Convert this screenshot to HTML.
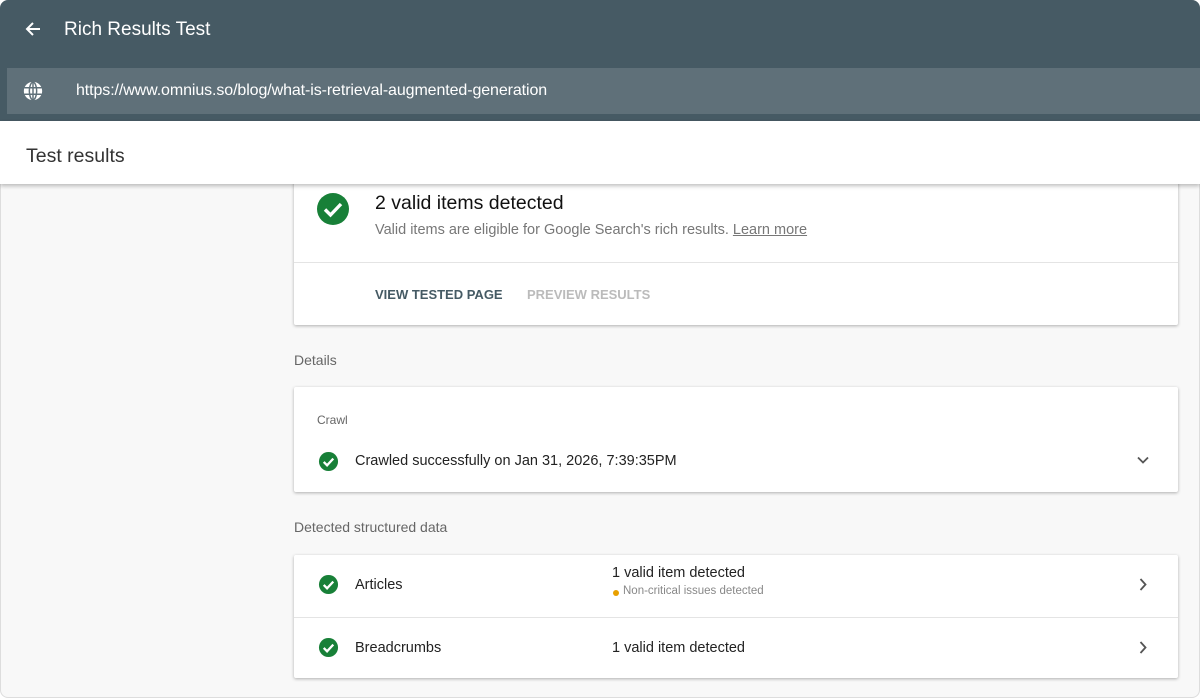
<!DOCTYPE html>
<html><head><style>
*{box-sizing:border-box;margin:0;padding:0}
body{width:1200px;height:698px;overflow:hidden;background:#fff;font-family:"Liberation Sans",Arial,sans-serif;position:relative}
.frame{position:absolute;left:0;top:0;width:1200px;height:698px;border-radius:8px;overflow:hidden;background:#f8f8f8;box-shadow:inset 0 0 0 1px #ddd}
.hdr{position:absolute;left:0;top:0;width:1200px;height:121px;background:#465a64}
.title{position:absolute;left:64px;top:19px;font-size:19px;color:#fff}
.url{position:absolute;left:7px;top:68px;right:0;height:46px;background:#5f7079}
.url span{position:absolute;left:69px;top:14px;color:#fff;font-size:16px;letter-spacing:-0.1px}
.tr{position:absolute;left:0;top:121px;width:1200px;height:63px;background:#fff;box-shadow:0 2px 4px rgba(0,0,0,.25);z-index:5}
.tr span{position:absolute;left:26px;top:24px;font-size:19.5px;color:#333}
.card{position:absolute;left:294px;width:884px;background:#fff;box-shadow:0 1px 3px rgba(0,0,0,.3);border-radius:2px}
.lbl{position:absolute;left:294px;font-size:14px;color:#666}
.chk{position:absolute}
.t{position:absolute;font-size:14.5px;color:#222;white-space:nowrap}
</style></head><body><div class="frame">
<div class="hdr">
<svg style="position:absolute;left:24px;top:20px" width="18" height="18" viewBox="0 0 18 18"><path d="M16 9H3M9 3L3 9l6 6" stroke="#fff" stroke-width="2" fill="none"/></svg>
<div class="title">Rich Results Test</div>
<div class="url">
<svg style="position:absolute;left:15px;top:12px" width="22" height="22" viewBox="0 0 24 24"><circle cx="12" cy="12" r="10" fill="#fff"/><g stroke="#5f7079" stroke-width="1.6" fill="none"><ellipse cx="12" cy="12" rx="4" ry="9.5"/><path d="M2.5 8.5h19M2.5 15.5h19M12 2v20"/></g></svg>
<span>https://www.omnius.so/blog/what-is-retrieval-augmented-generation</span></div>
</div>
<div class="tr"><span>Test results</span></div>

<div class="card" style="top:170px;height:155px">
<svg class="chk" style="left:22px;top:22px" width="34" height="34" viewBox="0 0 34 34"><circle cx="17" cy="17" r="16" fill="#188038"/><path d="M9 17.5l5.5 5.5L25 12" stroke="#fff" stroke-width="3.4" fill="none"/></svg>
<div class="t" style="left:81px;top:22px;font-size:19.5px;color:#111">2 valid items detected</div>
<div class="t" style="left:81px;top:52px;color:#777">Valid items are eligible for Google Search's rich results. <u>Learn more</u></div>
<div style="position:absolute;left:0;right:0;top:92px;border-top:1px solid #e4e4e4"></div>
<div class="t" style="left:81px;top:117px;font-size:13px;font-weight:bold;color:#455a64">VIEW TESTED PAGE</div>
<div class="t" style="left:233px;top:117px;font-size:13px;font-weight:bold;color:#bbb">PREVIEW RESULTS</div>
</div>

<div class="lbl" style="top:352px">Details</div>
<div class="card" style="top:387px;height:105px">
<div class="t" style="left:23px;top:26px;font-size:12px;color:#666">Crawl</div>
<svg class="chk" style="left:24px;top:64px" width="21" height="21" viewBox="0 0 22 22"><circle cx="11" cy="11" r="10" fill="#188038"/><path d="M6 11.5l3.5 3.5L16 8" stroke="#fff" stroke-width="2.4" fill="none"/></svg>
<div class="t" style="left:61px;top:66px">Crawled successfully on Jan 31, 2026, 7:39:35PM</div>
<svg style="position:absolute;left:843px;top:69px" width="12" height="8" viewBox="0 0 12 8"><path d="M1 1.5l5 5 5-5" stroke="#555" stroke-width="1.8" fill="none"/></svg>
</div>

<div class="lbl" style="top:519px">Detected structured data</div>
<div class="card" style="top:555px;height:123px">
<svg class="chk" style="left:24px;top:19px" width="21" height="21" viewBox="0 0 22 22"><circle cx="11" cy="11" r="10" fill="#188038"/><path d="M6 11.5l3.5 3.5L16 8" stroke="#fff" stroke-width="2.4" fill="none"/></svg>
<div class="t" style="left:61px;top:22px">Articles</div>
<div class="t" style="left:318px;top:10px">1 valid item detected</div>
<div style="position:absolute;left:319px;top:35px;width:6px;height:6px;border-radius:50%;background:#e8a000"></div>
<div class="t" style="left:329px;top:30px;font-size:11.5px;color:#888">Non-critical issues detected</div>
<svg style="position:absolute;left:845px;top:23px" width="8" height="13" viewBox="0 0 8 13"><path d="M1.5 1l5 5.5-5 5.5" stroke="#555" stroke-width="1.8" fill="none"/></svg>
<div style="position:absolute;left:0;right:0;top:62px;border-top:1px solid #e4e4e4"></div>
<svg class="chk" style="left:24px;top:82px" width="21" height="21" viewBox="0 0 22 22"><circle cx="11" cy="11" r="10" fill="#188038"/><path d="M6 11.5l3.5 3.5L16 8" stroke="#fff" stroke-width="2.4" fill="none"/></svg>
<div class="t" style="left:61px;top:85px">Breadcrumbs</div>
<div class="t" style="left:318px;top:85px">1 valid item detected</div>
<svg style="position:absolute;left:845px;top:86px" width="8" height="13" viewBox="0 0 8 13"><path d="M1.5 1l5 5.5-5 5.5" stroke="#555" stroke-width="1.8" fill="none"/></svg>
</div>
</div></body></html>
